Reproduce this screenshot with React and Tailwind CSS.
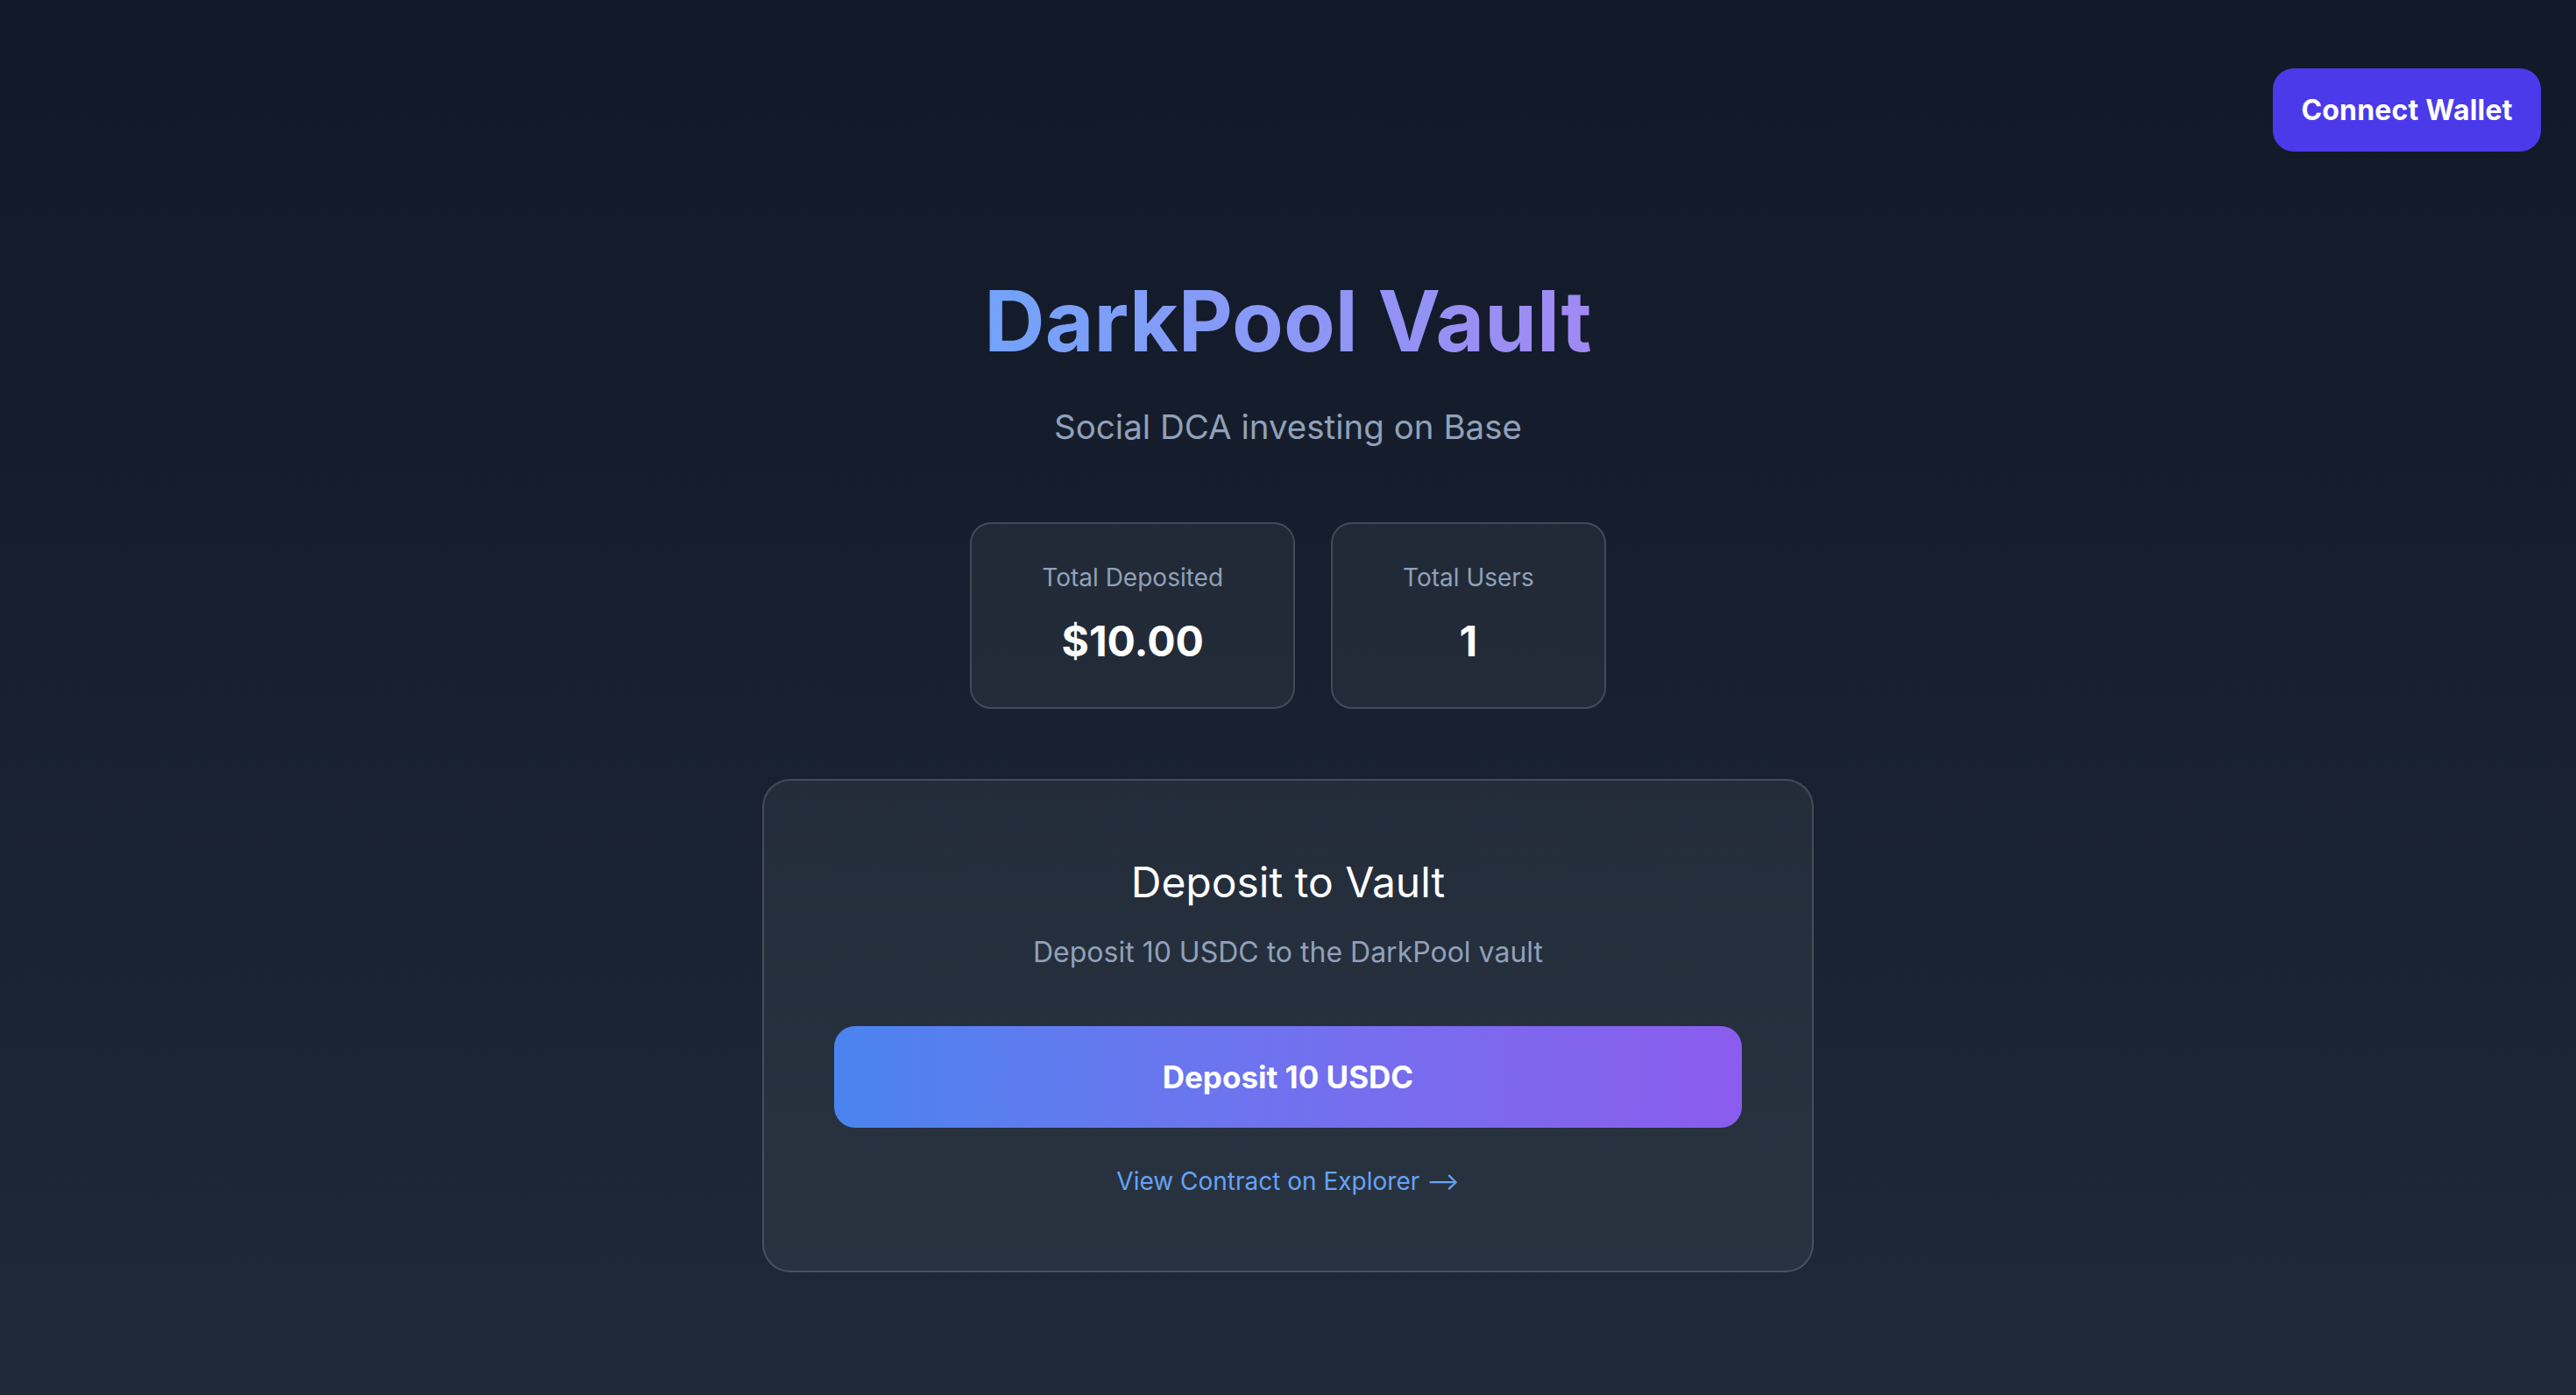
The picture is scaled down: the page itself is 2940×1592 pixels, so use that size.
import React from 'react';

const Stat = ({ label, value }) => (
  <div className="flex flex-col items-center rounded-3xl border-2 border-white/15 bg-white/5 px-20 pt-[41px] pb-[43px]">
    <p className="text-[28px] leading-[40px] text-slate-400">{label}</p>
    <p className="mt-[21px] text-5xl leading-[64px] font-bold text-white">{value}</p>
  </div>
);

const App = () => {
  return (
    <div className="min-h-screen bg-gradient-to-b from-[#111827] to-[#1f2937] font-['Inter',sans-serif]">
      {/* Header */}
      <header className="flex justify-end pt-[78px] pr-10">
        <button className="flex h-[95px] w-[306px] items-center justify-center rounded-3xl bg-[#4b3aea] text-[32px] font-bold tracking-[0.2px] text-white">
          Connect Wallet
        </button>
      </header>

      <main className="flex flex-col items-center pb-20">
        <h1 className="mt-[145px] bg-gradient-to-r from-[#72a3f9] to-[#9f8af3] bg-clip-text text-8xl leading-none font-bold text-transparent">
          DarkPool Vault
        </h1>
        <p className="mt-[45px] text-[38.5px] leading-[56px] text-slate-400">Social DCA investing on Base</p>

        {/* Stats */}
        <div className="mt-[81px] flex gap-[41px]">
          <Stat label="Total Deposited" value="$10.00" />
          <Stat label="Total Users" value="1" />
        </div>

        {/* Deposit card */}
        <div className="mt-20 flex w-[1200px] flex-col items-center rounded-[32px] border-2 border-white/15 bg-white/5 px-20 pt-[84px] pb-[82px]">
          <h2 className="text-5xl leading-[64px] font-normal text-white">Deposit to Vault</h2>
          <p className="mt-6 text-[32px] leading-[48px] text-slate-400">Deposit 10 USDC to the DarkPool vault</p>
          <button className="mt-[60px] h-[116px] w-full rounded-3xl bg-gradient-to-r from-[#4a84ef] to-[#8a5cee] text-[35px] font-bold text-white">
            Deposit 10 USDC
          </button>
          <a href="#" className="mt-[41px] text-[28px] leading-[40px] text-[#66a3f4]">
            View Contract on Explorer ⟶
          </a>
        </div>
      </main>
    </div>
  );
};

export default App;
